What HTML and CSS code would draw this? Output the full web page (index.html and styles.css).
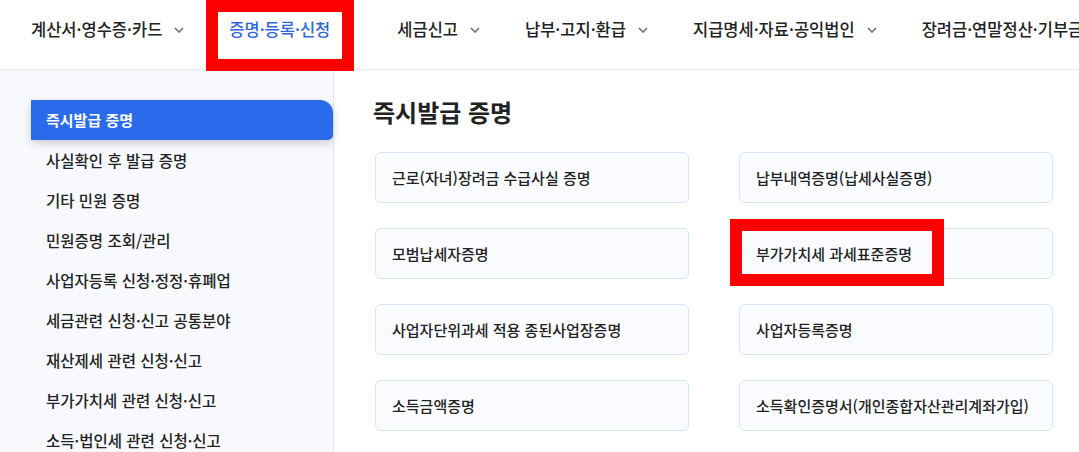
FILE: index.html
```html
<!DOCTYPE html>
<html lang="ko">
<head>
  <meta charset="UTF-8" />
  <meta name="viewport" content="width=device-width, initial-scale=1.0"/>
  <title>증명·등록·신청</title>
  <link rel="stylesheet" href="styles.css">
</head>
<body>
  <header class="gnb">
    <ul class="gnb-list">
      <li class="gnb-item"><span>계산서·영수증·카드</span><svg class="chev" viewBox="0 0 10 6"><path d="M1 1l4 4 4-4"/></svg></li>
      <li class="gnb-item is-active"><span>증명·등록·신청</span><svg class="chev" viewBox="0 0 10 6"><path d="M1 1l4 4 4-4"/></svg></li>
      <li class="gnb-item"><span>세금신고</span><svg class="chev" viewBox="0 0 10 6"><path d="M1 1l4 4 4-4"/></svg></li>
      <li class="gnb-item"><span>납부·고지·환급</span><svg class="chev" viewBox="0 0 10 6"><path d="M1 1l4 4 4-4"/></svg></li>
      <li class="gnb-item"><span>지급명세·자료·공익법인</span><svg class="chev" viewBox="0 0 10 6"><path d="M1 1l4 4 4-4"/></svg></li>
      <li class="gnb-item"><span>장려금·연말정산·기부금</span><svg class="chev" viewBox="0 0 10 6"><path d="M1 1l4 4 4-4"/></svg></li>
    </ul>
  </header>

  <div class="wrap">
    <aside class="lnb">
      <ul>
        <li class="lnb-item is-active">즉시발급 증명</li>
        <li class="lnb-item">사실확인 후 발급 증명</li>
        <li class="lnb-item">기타 민원 증명</li>
        <li class="lnb-item">민원증명 조회/관리</li>
        <li class="lnb-item">사업자등록 신청·정정·휴폐업</li>
        <li class="lnb-item">세금관련 신청·신고 공통분야</li>
        <li class="lnb-item">재산제세 관련 신청·신고</li>
        <li class="lnb-item">부가가치세 관련 신청·신고</li>
        <li class="lnb-item">소득·법인세 관련 신청·신고</li>
      </ul>
    </aside>

    <main class="content">
      <h2 class="content-title">즉시발급 증명</h2>
      <div class="cards">
        <a class="card">근로(자녀)장려금 수급사실 증명</a>
        <a class="card">납부내역증명(납세사실증명)</a>
        <a class="card">모범납세자증명</a>
        <a class="card">부가가치세 과세표준증명</a>
        <a class="card">사업자단위과세 적용 종된사업장증명</a>
        <a class="card">사업자등록증명</a>
        <a class="card">소득금액증명</a>
        <a class="card">소득확인증명서(개인종합자산관리계좌가입)</a>
      </div>
    </main>
  </div>

  <!-- highlight boxes drawn over the page -->
  <div class="mark mark-gnb"></div>
  <div class="mark mark-card"></div>
</body>
</html>
```

FILE: styles.css
```css
* { box-sizing: border-box; }
html, body { margin: 0; padding: 0; }
body { font-family: "Noto Sans CJK KR", "Noto Sans", sans-serif; color: #222; background: #fff; width: 1079px; height: 452px; overflow: hidden; position: relative; }
ul { list-style: none; margin: 0; padding: 0; }

.gnb { height: 70px; border-bottom: 1px solid #e6e8ec; background: #fff; }
.gnb-list { display: flex; gap: 45px; padding: 18px 0 0 31px; white-space: nowrap; }
.gnb-item { display: flex; align-items: center; gap: 12px; font-size: 16.5px; font-weight: 500; line-height: 22px; color: #222; flex-shrink: 0; }
.gnb-item.is-active { color: #2f66e0; }
.gnb-item.is-active .chev { visibility: hidden; }
.chev { width: 10px; height: 6px; fill: none; stroke: #6b6f76; stroke-width: 1.6; margin-top: 2px; }

.wrap { display: flex; height: 382px; }
.lnb { width: 334px; background: #f8f9fd; border-right: 1px solid #dfe7f7; padding: 30px 0 0 31px; flex-shrink: 0; }
.lnb-item { height: 40px; line-height: 40px; padding-left: 15px; font-size: 15.5px; font-weight: 500; color: #222; white-space: nowrap; }
.lnb-item.is-active { background: #2a6bec; color: #fff; font-weight: 700; font-size: 15px; border-radius: 0 13px 5px 0; box-shadow: 0 3px 8px rgba(0, 0, 0, 0.18); }

.content { padding: 27px 0 0 41px; }
.content-title { margin: 0 0 25px -2px; font-size: 24px; font-weight: 700; line-height: 30px; color: #222; }
.cards { display: grid; grid-template-columns: 314px 314px; column-gap: 50px; row-gap: 25px; }
.card { display: flex; align-items: center; height: 51px; padding: 0 16px; background: #fafcff; border: 1px solid #d6e4fc; border-radius: 6px; font-size: 15px; font-weight: 500; color: #222; white-space: nowrap; }

.mark { position: absolute; border: 12px solid #ff0000; }
.mark-gnb { left: 206px; top: 0; width: 148px; height: 71px; }
.mark-card { left: 730px; top: 219px; width: 214px; height: 67px; }
```
